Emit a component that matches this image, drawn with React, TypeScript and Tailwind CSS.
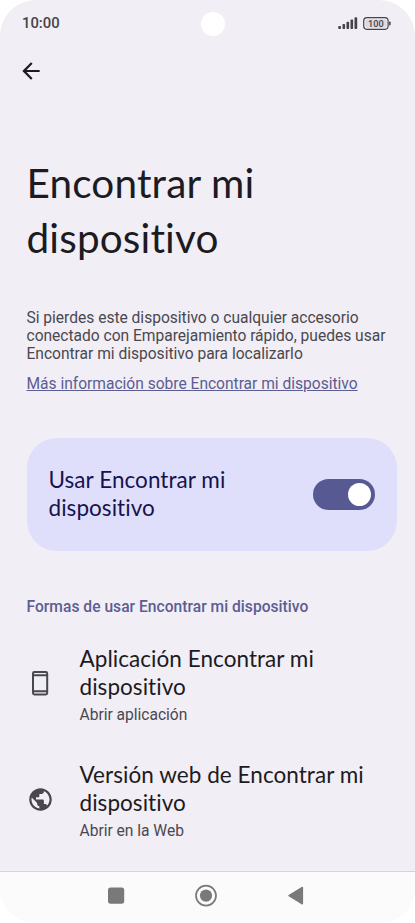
import React, { useState } from 'react';
import { MdArrowBack, MdPublic } from 'react-icons/md';

interface OptionProps {
  icon: React.ReactNode;
  lines: string[];
  subtitle: string;
}

const StatusBar: React.FC = () => (
  <header className="flex h-[47px] shrink-0 items-center justify-between pl-[22px] pr-[24px] font-[Roboto,sans-serif]">
    <span className="w-[52px] text-[14.8px] font-medium leading-none text-[#45444a]">10:00</span>
    <span className="ml-[14px] mt-px h-6 w-6 rounded-full bg-white" />
    <div className="flex items-center gap-[5px]">
      <svg className="-mt-px h-3 w-5" viewBox="0 0 20 12" fill="#454349">
        <rect x="0.2" y="9" width="2.8" height="3" rx="0.9" />
        <rect x="4.5" y="7" width="2.6" height="5" rx="0.8" />
        <rect x="8.5" y="4.8" width="2.6" height="7.2" rx="0.8" />
        <rect x="12.5" y="2.6" width="2.6" height="9.4" rx="0.8" />
        <rect x="16.5" y="0.3" width="2.7" height="11.7" rx="0.8" />
      </svg>
      <svg className="-mt-px h-[13px] w-7" viewBox="0 0 28 13">
        <rect x="0.7" y="0.7" width="24.4" height="11.6" rx="3.2" fill="#f1eef5" stroke="#454349" strokeWidth="1.2" />
        <rect x="2.3" y="2.2" width="21.2" height="8.6" rx="1.8" fill="#dcdae1" />
        <rect x="26.1" y="4.5" width="1.5" height="4" rx="0.7" fill="#454349" />
        <text x="12.9" y="9.8" textAnchor="middle" fontSize="9.2" fontWeight="500" fill="#454349">100</text>
      </svg>
    </div>
  </header>
);

const PhoneIcon: React.FC = () => (
  <svg className="h-[26px] w-[26px]" viewBox="0 0 26 26" fill="none" stroke="#49484f" strokeWidth="2">
    <rect x="6" y="2" width="14.2" height="22.4" rx="1.4" />
    <path d="M6 5.3h14M6 21.2h14" strokeWidth="2" />
  </svg>
);

const Option: React.FC<OptionProps> = ({ icon, lines, subtitle }) => (
  <button className="flex w-full items-center text-left">
    <span className="mb-[3px] flex w-[53px] shrink-0">{icon}</span>
    <span className="flex flex-col">
      {lines.map((line) => (
        <span key={line}
          className="block whitespace-nowrap font-[Lato,sans-serif] text-[22.5px] leading-[28px] tracking-[0.05px] text-[#1d1b22] [font-variant-ligatures:none]">
          {line}
        </span>
      ))}
      <span className="mt-[4px] font-[Roboto,sans-serif] text-[15.6px] leading-[20px] tracking-[-0.02px] text-[#4a484f]">{subtitle}</span>
    </span>
  </button>
);

const Switch: React.FC<{ checked: boolean; onChange: (value: boolean) => void }> = ({ checked, onChange }) => (
  <button role="switch" aria-checked={checked} aria-label="Usar Encontrar mi dispositivo"
    onClick={() => onChange(!checked)}
    className={`flex h-[31px] w-[62px] items-center rounded-full px-1 transition ${checked ? 'justify-end bg-[#575992]' : 'justify-start bg-[#8b8a94]'}`}>
    <span className="h-[23px] w-[23px] rounded-full bg-white" />
  </button>
);

const NavBar: React.FC = () => (
  <nav className="h-[52px] shrink-0 border-t border-[#d5d3da] bg-[#fbfbfb]">
    <svg className="h-[51px] w-[415px]" viewBox="0 0 415 51" fill="#797979">
      <rect x="108" y="15.5" width="16.2" height="16.2" rx="2.6" />
      <circle cx="206" cy="23.6" r="10" fill="none" stroke="#797979" strokeWidth="1.7" />
      <circle cx="206" cy="23.6" r="6.1" />
      <path d="M289 23.6L302.4 15.4V31.8Z" stroke="#797979" strokeWidth="1.4" strokeLinejoin="round" />
    </svg>
  </nav>
);

export default function App() {
  const [enabled, setEnabled] = useState(true);

  return (
    <div className="h-[923px] w-[415px] bg-white">
      <div className="flex h-full flex-col overflow-hidden rounded-[36px] bg-[#f1eef5]">
        <StatusBar />
        <button className="ml-[18px] mt-[11px] h-[25px] w-[26px] shrink-0" aria-label="Atrás">
          <MdArrowBack className="h-[26px] w-[26px] text-[#1d1b20]" />
        </button>

        <main className="flex flex-1 flex-col pl-[26.5px] pr-[18px]">
          <h1 className="mt-[72px] font-[Lato,sans-serif] text-[40.5px] leading-[55px] tracking-[0.15px] text-[#1d1b22] [font-variant-ligatures:none]">
            <span className="block whitespace-nowrap">Encontrar mi</span>
            <span className="block whitespace-nowrap">dispositivo</span>
          </h1>

          <p className="mt-[43.5px] whitespace-nowrap font-[Roboto,sans-serif] text-[15.6px] leading-[18.3px] tracking-[-0.02px] text-[#4a484f]">
            Si pierdes este dispositivo o cualquier accesorio<br />
            conectado con Emparejamiento rápido, puedes usar<br />
            Encontrar mi dispositivo para localizarlo
          </p>
          <a className="mt-[10.8px] self-start whitespace-nowrap font-[Roboto,sans-serif] text-[15.6px] leading-[20px] tracking-[-0.02px] text-[#5c5d92] underline">
            Más información sobre Encontrar mi dispositivo
          </a>

          <section className="mt-[43.8px] flex h-[113px] items-center justify-between rounded-[30px] bg-[#e0dffb] pl-[22px] pr-[22px]">
            <p className="font-[Lato,sans-serif] text-[22.5px] leading-[28px] tracking-[0.05px] text-[#17134e] [font-variant-ligatures:none]">
              <span className="block whitespace-nowrap">Usar Encontrar mi</span>
              <span className="block whitespace-nowrap">dispositivo</span>
            </p>
            <Switch checked={enabled} onChange={setEnabled} />
          </section>

          <h2 className="mt-[46px] whitespace-nowrap font-[Roboto,sans-serif] text-[15.6px] font-medium leading-[20px] tracking-[0.02px] text-[#5c5d92]">
            Formas de usar Encontrar mi dispositivo
          </h2>

          <div className="mt-[28px] flex flex-col gap-[36.5px]">
            <Option
              icon={<PhoneIcon />}
              lines={['Aplicación Encontrar mi', 'dispositivo']}
              subtitle="Abrir aplicación" />
            <Option
              icon={<MdPublic className="h-[27px] w-[27px] text-[#49484f]" />}
              lines={['Versión web de Encontrar mi', 'dispositivo']}
              subtitle="Abrir en la Web" />
          </div>
        </main>

        <NavBar />
      </div>
    </div>
  );
}
